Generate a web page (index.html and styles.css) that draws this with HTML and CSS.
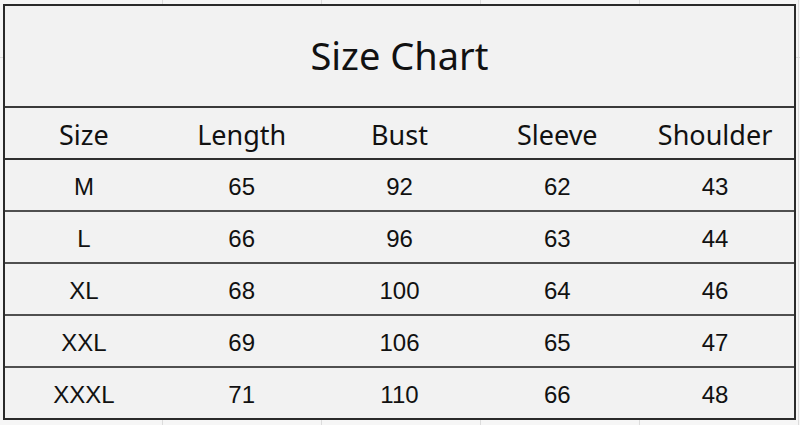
FILE: index.html
```html
<!DOCTYPE html>
<html>
<head>
<meta charset="utf-8">
<link rel="stylesheet" href="styles.css">
</head>
<body>
<div class="sheet">
  <div class="chart">
    <div class="title">Size Chart</div>
    <div class="row head">
      <div>Size</div><div>Length</div><div>Bust</div><div>Sleeve</div><div>Shoulder</div>
    </div>
    <div class="row"><div>M</div><div>65</div><div>92</div><div>62</div><div>43</div></div>
    <div class="row"><div>L</div><div>66</div><div>96</div><div>63</div><div>44</div></div>
    <div class="row"><div>XL</div><div>68</div><div>100</div><div>64</div><div>46</div></div>
    <div class="row"><div>XXL</div><div>69</div><div>106</div><div>65</div><div>47</div></div>
    <div class="row last"><div>XXXL</div><div>71</div><div>110</div><div>66</div><div>48</div></div>
  </div>
</div>
</body>
</html>
```

FILE: styles.css
```css
html, body {
  margin: 0;
  padding: 0;
}
body {
  width: 800px;
  height: 425px;
  overflow: hidden;
  background: #f6f6f6;
}
.sheet {
  width: 800px;
  height: 425px;
  box-sizing: border-box;
  padding: 4px 4px 0 3px;
  background-image:
    repeating-linear-gradient(to right, transparent 0, transparent 158px, #dcdcdc 158px, #dcdcdc 159px),
    linear-gradient(to bottom, transparent 57px, #dcdcdc 57px, #dcdcdc 58px, transparent 58px);
  background-position: 4px 0, 0 0;
}
.chart {
  width: 793px;
  height: 416px;
  box-sizing: border-box;
  border: 2px solid #2a2a2a;
  background: #f2f2f2;
  display: flex;
  flex-direction: column;
  font-family: "Noto Sans", "Open Sans", sans-serif;
  color: #111;
}
.title {
  height: 102px;
  box-sizing: border-box;
  border-bottom: 2px solid #3a3a3a;
  display: flex;
  align-items: center;
  justify-content: center;
  font-size: 38px;
  padding-bottom: 2px;
}
.row {
  height: 52px;
  box-sizing: border-box;
  border-bottom: 2px solid #505050;
  display: grid;
  grid-template-columns: repeat(5, 1fr);
  align-items: center;
  text-align: center;
  font-family: "Liberation Sans", Arial, sans-serif;
  font-size: 24px;
}
.row.last {
  border-bottom: none;
  height: 50px;
}
.row.head {
  font-family: "Noto Sans", "Open Sans", sans-serif;
  font-size: 27px;
  border-bottom-color: #2f2f2f;
}
.row > div {
  padding-top: 3px;
}
.row.head > div {
  padding-top: 2px;
}
```
